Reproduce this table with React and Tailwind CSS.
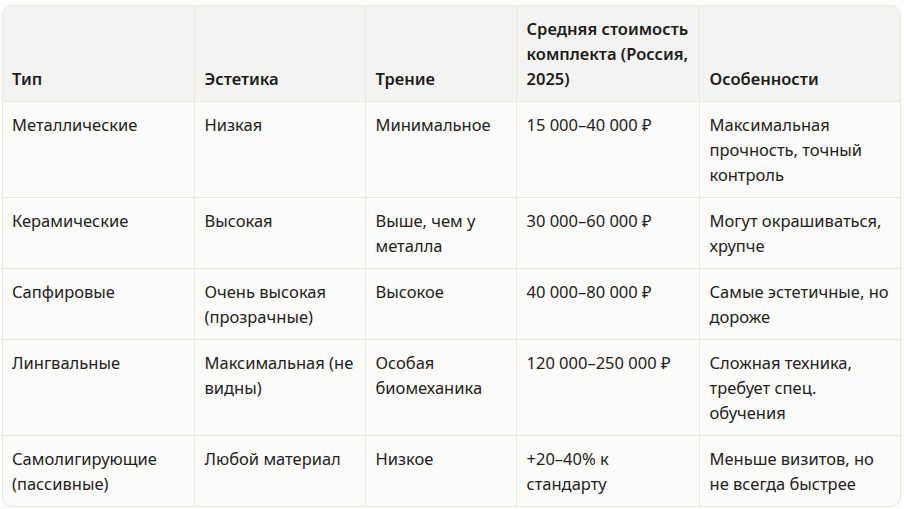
export default function App() {
  const rows = [
    ["Металлические", "Низкая", "Минимальное", "15 000–40 000 ₽", "Максимальная прочность, точный контроль"],
    ["Керамические", "Высокая", "Выше, чем у металла", "30 000–60 000 ₽", "Могут окрашиваться, хрупче"],
    ["Сапфировые", "Очень высокая (прозрачные)", "Высокое", "40 000–80 000 ₽", "Самые эстетичные, но дороже"],
    ["Лингвальные", "Максимальная (не видны)", "Особая биомеханика", "120 000–250 000 ₽", "Сложная техника, требует спец. обучения"],
    ["Самолигирующие (пассивные)", "Любой материал", "Низкое", "+20–40% к стандарту", "Меньше визитов, но не всегда быстрее"],
  ];
  const heads = ["Тип", "Эстетика", "Трение", "Средняя стоимость комплекта (Россия, 2025)", "Особенности"];
  return (
    <div className="w-[904px] h-[509px] bg-[#fdfcfb] pt-[5px] pl-[2px] pr-[3px]" style={{ fontFamily: '"Noto Sans", "Open Sans", sans-serif' }}>
      <div className="border border-[#e9e7e4] rounded-[10px] overflow-hidden bg-[#fcfbf9]">
        <table className="w-full table-fixed border-collapse text-[16.5px] leading-[25px] text-[#222]">
          <colgroup>
            <col className="w-[191px]" />
            <col className="w-[171px]" />
            <col className="w-[151px]" />
            <col className="w-[183px]" />
            <col />
          </colgroup>
          <thead>
            <tr className="bg-[#f4f3f1]">
              {heads.map((h, i) => (
                <th key={i} className={`text-left align-bottom font-semibold text-[#1c1c1c] pr-[10px] pt-[10px] pb-[10px] border-b border-[#e9e7e4] ${i === 0 ? "pl-[9px]" : "pl-[10px]"} ${i < 4 ? "border-r" : ""}`}>{h}</th>
              ))}
            </tr>
          </thead>
          <tbody>
            {rows.map((r, ri) => (
              <tr key={ri}>
                {r.map((c, ci) => (
                  <td key={ci} className={`align-top pr-[8px] pt-[10px] pb-[10px] border-[#e9e7e4] ${ci === 0 ? "pl-[9px]" : "pl-[10px]"} ${ri < rows.length - 1 ? "border-b" : ""} ${ci < 4 ? "border-r" : ""}`}>{c}</td>
                ))}
              </tr>
            ))}
          </tbody>
        </table>
      </div>
    </div>
  );
}
